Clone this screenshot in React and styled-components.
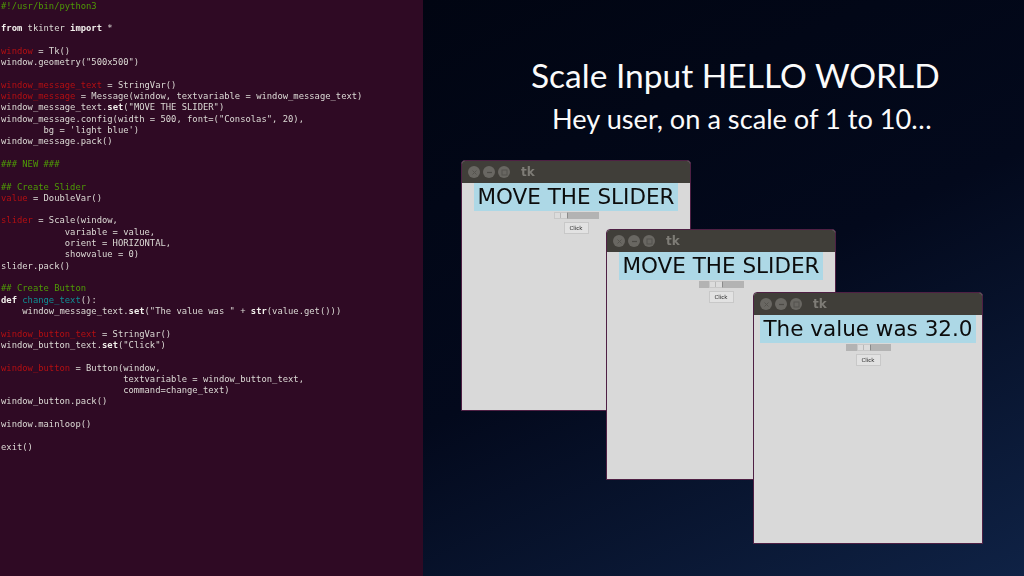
import styled, { createGlobalStyle } from "styled-components"

const Global = createGlobalStyle`
    html, body { margin: 0; padding: 0; background: #020617; }
    #root { width: 1024px; height: 576px; overflow: hidden; }
`

const code = [
    [["#!/usr/bin/python3", "c"]],
    [],
    [["from", "b"], [" tkinter "], ["import", "b"], [" *"]],
    [],
    [["window", "r"], [" = Tk()"]],
    [["window.geometry(\"500x500\")"]],
    [],
    [["window_message_text", "r"], [" = StringVar()"]],
    [["window_message", "r"], [" = Message(window, textvariable = window_message_text)"]],
    [["window_message_text."], ["set", "b"], ["(\"MOVE THE SLIDER\")"]],
    [["window_message.config(width = 500, font=(\"Consolas\", 20),"]],
    [["        bg = 'light blue')"]],
    [["window_message.pack()"]],
    [],
    [["### NEW ###", "c"]],
    [],
    [["## Create Slider", "c"]],
    [["value", "r"], [" = DoubleVar()"]],
    [],
    [["slider", "r"], [" = Scale(window,"]],
    [["            variable = value,"]],
    [["            orient = HORIZONTAL,"]],
    [["            showvalue = 0)"]],
    [["slider.pack()"]],
    [],
    [["## Create Button", "c"]],
    [["def", "b"], [" "], ["change_text", "t"], ["():"]],
    [["    window_message_text."], ["set", "b"], ["(\"The value was \" + "], ["str", "b"], ["(value.get()))"]],
    [],
    [["window_button_text", "r"], [" = StringVar()"]],
    [["window_button_text."], ["set", "b"], ["(\"Click\")"]],
    [],
    [["window_button", "r"], [" = Button(window,"]],
    [["                       textvariable = window_button_text,"]],
    [["                       command=change_text)"]],
    [["window_button.pack()"]],
    [],
    [["window.mainloop()"]],
    [],
    [["exit()"]],
]

const windows = [
    { left: 461, top: 160, height: 251, message: "MOVE THE SLIDER", thumb: 0 },
    { left: 606, top: 229, height: 251, message: "MOVE THE SLIDER", thumb: 10 },
    { left: 753, top: 292, height: 252, message: "The value was 32.0", thumb: 11 },
]

const TkWindow = ({ left, top, height, message, thumb }) => (
    <Win $left={left} $top={top} $height={height}>
        <TitleBar>
            <Dots>
                <Dot>
                    <svg width="7" height="7" viewBox="0 0 7 7">
                        <path d="M1.5 1.5l4 4M5.5 1.5l-4 4" stroke="#55534e" strokeWidth="1" />
                    </svg>
                </Dot>
                <Dot>
                    <svg width="7" height="7" viewBox="0 0 7 7">
                        <path d="M1 3.5h5" stroke="#4c4a45" strokeWidth="1.2" />
                    </svg>
                </Dot>
                <Dot>
                    <svg width="7" height="7" viewBox="0 0 7 7">
                        <rect x="1" y="1" width="5" height="5" fill="none" stroke="#55534e" strokeWidth="1" />
                    </svg>
                </Dot>
            </Dots>
            <TitleText>tk</TitleText>
        </TitleBar>
        <WinBody>
            <Message>{message}</Message>
            <Trough>
                <Thumb style={{ marginLeft: thumb }} />
            </Trough>
            <TkButton>Click</TkButton>
        </WinBody>
    </Win>
)

export default function App() {
    return (
        <Page>
            <Global />
            <Terminal>
                {code.map((line, i) => (
                    <CodeLine key={i}>
                        {line.map(([text, kind], j) => (
                            <Token key={j} $kind={kind}>{text}</Token>
                        ))}
                    </CodeLine>
                ))}
            </Terminal>
            <Slide>
                <Title>Scale Input HELLO WORLD</Title>
                <Subtitle>Hey user, on a scale of 1 to 10…</Subtitle>
                {windows.map((w, i) => (
                    <TkWindow key={i} {...w} />
                ))}
            </Slide>
        </Page>
    )
}

const tokenColors = {
    c: "#4e9a06",
    r: "#b40f12",
    t: "#0f8f94",
    b: "#f2f0ec",
}

const Page = styled.div`
    display: flex;
    width: 1024px;
    height: 576px;
    overflow: hidden;
`

const Terminal = styled.div`
    width: 423px;
    flex-shrink: 0;
    box-sizing: border-box;
    padding-top: 0.5px;
    background: #2f0a24;
    font-family: "DejaVu Sans Mono", monospace;
    font-size: 8.84px;
    line-height: 11.32px;
    white-space: pre;
    color: #dcdad5;
    filter: blur(0.3px);
`

const CodeLine = styled.div`
    height: 11.32px;
    padding-left: 1px;
`

const Token = styled.span`
    color: ${({ $kind }) => tokenColors[$kind] || "#dcdad5"};
    font-weight: ${({ $kind }) => ($kind === "b" ? 700 : 400)};
`

const Slide = styled.div`
    position: relative;
    flex: 1;
    box-sizing: border-box;
    padding: 55px 0 0 108px;
    background: linear-gradient(155deg, #010512 0%, #03091c 50%, #0f2245 100%);
    font-family: Lato, "Open Sans", sans-serif;
    color: #fbfbfb;
`

const Title = styled.div`
    font-size: 33.5px;
    line-height: 40px;
    white-space: nowrap;
`

const Subtitle = styled.div`
    margin: 8px 0 0 21px;
    font-size: 27.2px;
    line-height: 32px;
    white-space: nowrap;
`

const Win = styled.div`
    position: absolute;
    left: ${({ $left }) => $left - 423}px;
    top: ${({ $top }) => $top}px;
    width: 230px;
    height: ${({ $height }) => $height}px;
    box-sizing: border-box;
    display: flex;
    flex-direction: column;
    border: 1px solid #4f2044;
    border-radius: 4px 4px 0 0;
    background: #d9d9d9;
    filter: blur(0.35px);
`

const TitleBar = styled.div`
    display: flex;
    align-items: center;
    gap: 11px;
    height: 22px;
    flex-shrink: 0;
    padding: 0 0 0 6px;
    background: #403e39;
    border-radius: 3px 3px 0 0;
`

const Dots = styled.div`
    display: flex;
    gap: 3px;
`

const Dot = styled.span`
    display: flex;
    align-items: center;
    justify-content: center;
    width: 12px;
    height: 12px;
    border-radius: 50%;
    background: #696762;
`

const TitleText = styled.span`
    font-family: "DejaVu Sans", sans-serif;
    font-size: 12px;
    font-weight: 700;
    color: #7e7c76;
`

const WinBody = styled.div`
    flex: 1;
    display: flex;
    flex-direction: column;
    align-items: center;
`

const Message = styled.div`
    box-sizing: border-box;
    height: 28px;
    padding: 0 3.5px;
    background: #add8e6;
    font-family: "DejaVu Sans", sans-serif;
    font-size: 21.5px;
    line-height: 28px;
    white-space: nowrap;
    color: #0c0c0c;
`

const Trough = styled.div`
    display: flex;
    width: 45px;
    height: 7px;
    margin-top: 1px;
    background: #b3b3b3;
`

const Thumb = styled.div`
    position: relative;
    box-sizing: border-box;
    width: 14px;
    height: 7px;
    background: #dcdcdc;
    border: 1px solid #c8c8c8;
    border-right-color: #8a8a8a;

    &::after {
        content: "";
        position: absolute;
        left: 5px;
        top: 0;
        width: 1px;
        height: 5px;
        background: #b8b8b8;
    }
`

const TkButton = styled.div`
    box-sizing: border-box;
    width: 25px;
    height: 12px;
    margin-top: 3px;
    background: #e2e2e2;
    border: 1px solid #c8c8c8;
    text-align: center;
    font-family: "DejaVu Sans", sans-serif;
    font-size: 5.5px;
    line-height: 10px;
    color: #222;
`
